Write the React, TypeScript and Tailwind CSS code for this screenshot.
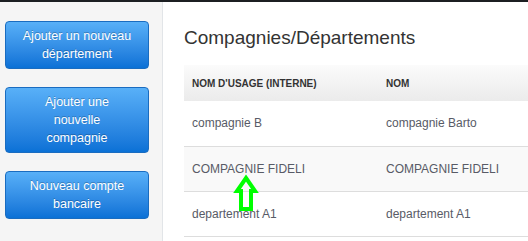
import React from 'react';

const boutons = ['Ajouter un nouveau département', 'Ajouter une nouvelle compagnie', 'Nouveau compte bancaire'];

const lignes = [
  { usage: 'compagnie B', nom: 'compagnie Barto' },
  { usage: 'COMPAGNIE FIDELI', nom: 'COMPAGNIE FIDELI' },
  { usage: 'departement A1', nom: 'departement A1' },
];

// flèche verte dessinée par-dessus le tableau
function Fleche() {
  return (
    <svg className="absolute left-[230px] top-[168px]" width="32" height="45" viewBox="0 0 32 45">
      <polygon
        points="16,8 25,21 21,21 21,39 11,39 11,21 7,21"
        fill="none"
        stroke="#00ff00"
        strokeWidth="4"
        strokeLinejoin="miter"
      />
    </svg>
  );
}

export default function App() {
  return (
    <div className="relative w-[528px] h-[241px] overflow-hidden bg-white border-t-2 border-[#1c1f22] font-['Liberation_Sans',Arial,sans-serif]">
      <div className="flex h-full">
        <aside className="w-[163px] shrink-0 bg-[#f5f5f5] border-r border-[#e2e5e8] pt-[19px] pl-[5px] flex flex-col gap-[18px]">
          {boutons.map((b) => (
            <button
              key={b}
              className="w-[144px] rounded-[4px] border border-[#1a6cc0] bg-gradient-to-b from-[#58b0f8] to-[#0a71d6] px-[16px] py-[5px] text-[12.5px] leading-[18px] text-white [text-shadow:0_-1px_0_rgba(0,0,0,0.25)]"
            >
              {b}
            </button>
          ))}
        </aside>
        <main className="flex-1 pl-[21px] pt-[25px]">
          <h1 className="text-[19px] leading-[21px] text-[#333] mb-[17px] whitespace-nowrap">Compagnies/Départements</h1>
          <table className="w-[500px] border-collapse text-left">
            <thead>
              <tr className="h-[36px] bg-gradient-to-b from-[#fbfbfb] to-[#ebebeb]">
                <th className="w-[194px] px-[8px] text-[10px] font-bold text-[#333] whitespace-nowrap">NOM D'USAGE (INTERNE)</th>
                <th className="px-[8px] text-[10px] font-bold text-[#333]">NOM</th>
              </tr>
            </thead>
            <tbody>
              {lignes.map((l, i) => (
                <tr key={i} className={`h-[45px] border-b border-[#dddddd] ${i % 2 === 1 ? 'bg-[#f9f9f9]' : ''}`}>
                  <td className="px-[8px] text-[12px] text-[#585b66] whitespace-nowrap">{l.usage}</td>
                  <td className="px-[8px] text-[12px] text-[#585b66] whitespace-nowrap">{l.nom}</td>
                </tr>
              ))}
            </tbody>
          </table>
        </main>
      </div>
      <Fleche />
    </div>
  );
}
